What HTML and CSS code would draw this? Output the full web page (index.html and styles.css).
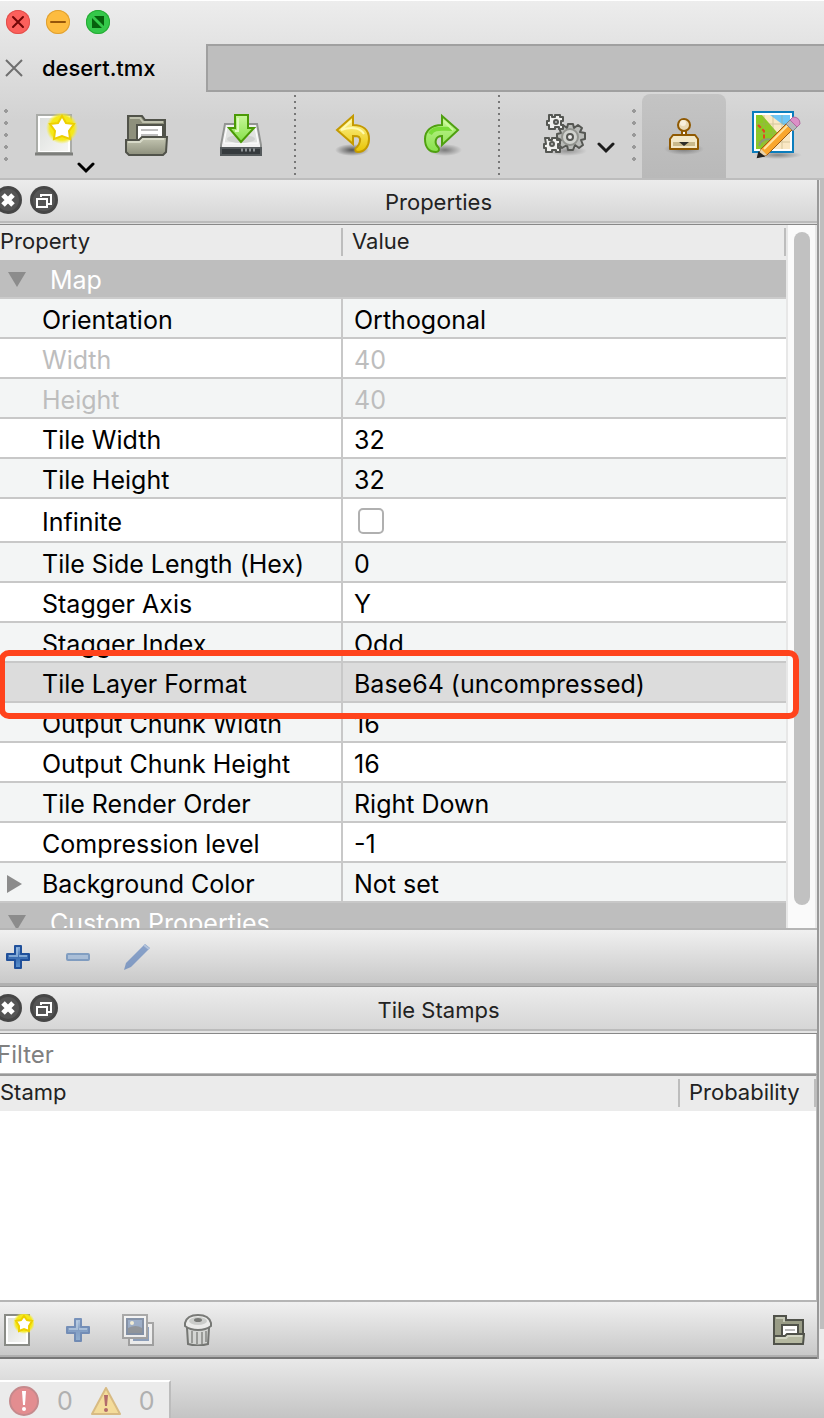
FILE: index.html
```html
<!DOCTYPE html>
<html lang="en">
<head>
<meta charset="utf-8">
<title>desert.tmx</title>
<link rel="stylesheet" href="styles.css">
</head>
<body>
<svg class="defs" aria-hidden="true">
  <defs>
    <linearGradient id="gold" x1="0" y1="0" x2="0" y2="1"><stop offset="0" stop-color="#fff7a0"/><stop offset="1" stop-color="#e8c400"/></linearGradient>
    <linearGradient id="lime" x1="0" y1="0" x2="0" y2="1"><stop offset="0" stop-color="#c8f79a"/><stop offset="1" stop-color="#86e04a"/></linearGradient>
    <linearGradient id="olive" x1="0" y1="0" x2="0" y2="1"><stop offset="0" stop-color="#c6c8b4"/><stop offset="1" stop-color="#8d8f7c"/></linearGradient>
    <linearGradient id="paper" x1="0" y1="0" x2="1" y2="1"><stop offset="0" stop-color="#dcdfdc"/><stop offset="1" stop-color="#f6f6f4"/></linearGradient>
    <linearGradient id="blue" x1="0" y1="0" x2="0" y2="1"><stop offset="0" stop-color="#8db4e0"/><stop offset=".5" stop-color="#3b6cb0"/><stop offset="1" stop-color="#5b93cf"/></linearGradient>
    <radialGradient id="shade"><stop offset="0" stop-color="#000" stop-opacity=".6"/><stop offset="1" stop-color="#000" stop-opacity="0"/></radialGradient>
    <radialGradient id="glow"><stop offset="0" stop-color="#f7e600"/><stop offset=".75" stop-color="#f5e91c"/><stop offset="1" stop-color="#f5ee3c" stop-opacity="0"/></radialGradient>
    <symbol id="i-close" viewBox="0 0 28 28"><circle cx="14" cy="14" r="14" fill="#464646"/><circle cx="14" cy="14" r="11" fill="#555"/><path d="M9 9l10 10M19 9L9 19" stroke="#fff" stroke-width="5"/></symbol>
    <symbol id="i-float" viewBox="0 0 28 28"><circle cx="14" cy="14" r="14" fill="#464646"/><circle cx="14" cy="14" r="11" fill="#555"/><path d="M11 11V9h10v9h-3" fill="none" stroke="#fff" stroke-width="2"/><path d="M7 13h10v8H7z" fill="#555" stroke="#fff" stroke-width="2"/></symbol>
    <symbol id="i-plus" viewBox="0 0 24 24"><path d="M9 1h6v8h8v6h-8v8H9v-8H1V9h8z" fill="url(#blue)" stroke="#20509a" stroke-width="2" stroke-linejoin="round"/><path d="M11 3v8H3M13 11h8" fill="none" stroke="#9cc0e6" stroke-width="2" opacity=".7"/></symbol>
    <symbol id="i-new" viewBox="0 0 44 44"><path d="M3 2h34v38H3z" fill="#fff" stroke="#aaaca8" stroke-width="2"/><path d="M6 5h28v33H6z" fill="url(#paper)"/><path d="M1 41h38" stroke="#7d7e7b" stroke-width="3"/><circle cx="28" cy="15" r="16" fill="url(#glow)"/><path d="M28 5l3 6 7 1-5 5 1 7-6-3-6 3 1-7-5-5 7-1z" fill="#fff" stroke="#fff" stroke-width="3" stroke-linejoin="round"/><path d="M28 3l4 7 8 1-5 7 1 8-8-3-8 3 1-8-5-7 8-1z" fill="none" stroke="#edcf00" stroke-width="2"/></symbol>
    <symbol id="i-folder" viewBox="0 0 44 42"><path d="M3 26V2h14l3 4h20v20z" fill="#8e907c" stroke="#51534a" stroke-width="2"/><path d="M5 4h10l3 4h20" fill="none" stroke="#bfc1ae" stroke-width="2"/><path d="M12 30V11h26v17" fill="#fff" stroke="#51534a" stroke-width="2"/><path d="M16 16h17M16 21h17" stroke="#bfbfbf" stroke-width="2"/><path d="M1 26h13l3-3h25l-1 15-3 3H4l-3-3z" fill="url(#olive)" stroke="#51534a" stroke-width="2"/><path d="M3 28h12l3-3h21" fill="none" stroke="#d8dac9" stroke-width="2"/></symbol>
  </defs>
</svg>

<header class="window-head">
  <div class="titlebar">
    <button class="light light-red" aria-label="Close window"><svg viewBox="0 0 24 24"><path d="M7 7l10 10M17 7L7 17" stroke="#730707" stroke-width="2" stroke-linecap="round"/></svg></button>
    <button class="light light-yellow" aria-label="Minimise window"><svg viewBox="0 0 24 24"><path d="M5 12h14" stroke="#96560a" stroke-width="2" stroke-linecap="round"/></svg></button>
    <button class="light light-green" aria-label="Zoom window"><svg viewBox="0 0 24 24"><path d="M8 6h10v10zM6 8v10h10z" fill="#06600d"/></svg></button>
  </div>
  <div class="tabs">
    <div class="tab">
      <button class="icon-button" aria-label="Close tab"><svg width="28" height="28" viewBox="0 0 28 28"><path d="M6 6l16 16M22 6L6 22" stroke="#6f6f6f" stroke-width="2"/></svg></button>
      <span>desert.tmx</span>
    </div>
    <div class="tab-rest"></div>
  </div>
  <div class="toolbar">
    <span class="grip"></span>
    <button class="icon-button tool-new" aria-label="New"><svg width="44" height="44"><use href="#i-new"/></svg>
      <svg class="chevron" width="18" height="12" viewBox="0 0 18 12"><path d="M2 2l7 7 7-7" fill="none" stroke="#000" stroke-width="3" stroke-linecap="round"/></svg></button>
    <button class="icon-button tool-open" aria-label="Open"><svg width="44" height="42"><use href="#i-folder"/></svg></button>
    <button class="icon-button tool-save" aria-label="Save"><svg width="44" height="44" viewBox="0 0 44 44"><path d="M6 11h32l4 21v10H2V32z" fill="#f1f1f1" stroke="#929492" stroke-width="2"/><path d="M8 14l-3 16h34l-3-16" fill="#e1e3e1" stroke="#fff"/><ellipse cx="22" cy="26" rx="14" ry="4" fill="#cfd1cf"/><path d="M2 35h40v7H2z" fill="#353a3d" stroke="#555a5c" stroke-width="2"/><path d="M22 37h14" stroke="#8d9295" stroke-width="3" stroke-dasharray="2 2"/><path d="M16 2h13v13h6L22 29 10 15h6z" fill="url(#lime)" stroke="#4b9a06" stroke-width="2"/><path d="M19 5v13h-3" fill="none" stroke="#dcfbbd" stroke-width="2"/></svg></button>
    <span class="divider"></span>
    <button class="icon-button tool-undo" aria-label="Undo"><svg width="44" height="44" viewBox="0 0 44 44"><ellipse cx="20" cy="37" rx="17" ry="6" fill="url(#shade)"/><path d="M21 3v9c10 0 16 5 16 14 0 7-4 13-11 13-3 0-4-3-1-5 3-3 4-8 2-10-1-1-3-1-6-1v8L5 17z" fill="url(#gold)" stroke="#c49a00" stroke-width="2"/><path d="M19 8l-10 9c9-3 19-3 23 4" fill="none" stroke="#fffbb0" stroke-width="2"/></svg></button>
    <button class="icon-button tool-redo" aria-label="Redo"><svg width="44" height="44" viewBox="0 0 44 44"><ellipse cx="24" cy="37" rx="17" ry="6" fill="url(#shade)" opacity=".7"/><path d="M21 3v9C10 12 4 18 4 26c0 8 4 13 11 13 3 0 4-3 2-5-4-4-3-11 4-11v9l16-15z" fill="url(#lime)" stroke="#4fa010" stroke-width="2"/><path d="M9 21c4-7 10-5 22-5" fill="none" stroke="#79dc36" stroke-width="4"/><path d="M23 8l9 9" fill="none" stroke="#cdfb9b" stroke-width="2"/></svg></button>
    <span class="divider"></span>
    <button class="icon-button tool-gears" aria-label="Commands">
      <svg width="44" height="44" viewBox="0 0 44 44"><ellipse cx="24" cy="38" rx="20" ry="5" fill="url(#shade)" opacity=".5"/><g stroke="#555753" stroke-width="2" stroke-linejoin="round"><path d="M25 11h5l1 4 4-3 4 3-2 4 5 1v6l-4 1 2 5-4 3-4-3-2 5h-5l-1-5-5 3-4-4 3-4-4-2v-4l4-1-2-5 4-3 4 3z" fill="#b9bbb8"/><path d="M6 2h3v2h3V2h5v2h3v4h-2v4h2v4h-4v-2h-4v2H6v-4H4V8h2zM2 25h4v2h3v-2h5v2h3v4h-2v4h2v4h-4v-2H9v2H3v-4H1v-4h2z" fill="#f0f0ee"/></g><g stroke="#555753" stroke-width="2"><circle cx="27" cy="24" r="8" fill="#d0d2ce" stroke="#92948f"/><circle cx="27" cy="24" r="3" fill="#efefef"/><circle cx="13" cy="9" r="2" fill="#bbb"/><circle cx="9" cy="31" r="2" fill="#bbb"/></g></svg>
      <svg width="18" height="12" viewBox="0 0 18 12"><path d="M2 2l7 7 7-7" fill="none" stroke="#1c1c1c" stroke-width="3" stroke-linecap="round"/></svg>
    </button>
    <span class="grip"></span>
    <button class="icon-button tool-stamp" aria-label="Stamp Brush" aria-pressed="true"><svg width="44" height="44" viewBox="0 0 44 44"><ellipse cx="22" cy="35" rx="20" ry="6" fill="url(#shade)" opacity=".6"/><path d="M20 16h4v8h-4z" fill="#fff" stroke="#8f5902" stroke-width="2"/><circle cx="22" cy="11" r="6" fill="#e9d9b4" stroke="#8f5902" stroke-width="2"/><circle cx="21" cy="9" r="3" fill="#f7efdb"/><path d="M11 21h22l3 4v10H8V25z" fill="#f3e8c8" stroke="#8f5902" stroke-width="2" stroke-linejoin="round"/><path d="M11 28h22v4H11z" fill="#c9b98b"/><path d="M17 28h10l-5 4z" fill="#2e2e2a"/></svg></button>
    <button class="icon-button tool-map" aria-label="Terrain Brush"><svg width="52" height="50" viewBox="0 0 52 50"><ellipse cx="28" cy="45" rx="24" ry="4" fill="url(#shade)" opacity=".6"/><path d="M3 2h40v40H3z" fill="#fff" stroke="#0b7dbd" stroke-width="2"/><path d="M6 5h34v34H6z" fill="#fae8c4"/><path d="M20 5h20v15z" fill="#6fc6f6"/><path d="M6 5h6l19 22-10 12H6z" fill="#8bc924"/><path d="M14 5v34M23 5v34M32 5v34M6 14h34M6 23h34M6 32h34" stroke="#a99f70" opacity=".45"/><path d="M8 15l6 6v8l-5 5" fill="none" stroke="#e4451f" stroke-width="2" stroke-dasharray="4 2"/><path d="M9 36c2-8 12-9 15-2" fill="none" stroke="#8b9b78" stroke-width="2"/><path d="M8 47l3-8L38 12l6 6-27 27z" fill="#f9a62d" stroke="#9b5b18" stroke-width="1"/><path d="M14 39l25-25" stroke="#ffe3a3" stroke-width="2"/><path d="M8 47l3-8 6 6z" fill="#ead3ac"/><path d="M8 47l1-4 4 3z" fill="#222" stroke="#222" stroke-width="2"/><path d="M36 14l4-4 7 7-4 4z" fill="#b5b8bb" stroke="#82868a"/><path d="M40 10l3-3q7 0 7 7l-3 3z" fill="#dc8fc7" stroke="#b269a0"/></svg></button>
  </div>
</header>

<main class="workspace">
  <div class="docks">
    <section class="dock" aria-label="Properties">
      <div class="dock-title">
        <button class="icon-button dock-close" aria-label="Close Properties"><svg width="28" height="28"><use href="#i-close"/></svg></button>
        <button class="icon-button" aria-label="Float Properties"><svg width="28" height="28"><use href="#i-float"/></svg></button>
        <h2>Properties</h2>
      </div>
      <div class="property-view">
        <table class="properties">
          <colgroup><col class="col-name"><col></colgroup>
          <thead><tr><th scope="col"><span>Property</span></th><th scope="col"><span>Value</span></th></tr></thead>
          <tbody>
            <tr class="group"><th colspan="2" scope="colgroup"><i class="arrow-down"></i>Map</th></tr>
            <tr><td>Orientation</td><td>Orthogonal</td></tr>
            <tr class="disabled"><td>Width</td><td>40</td></tr>
            <tr class="disabled"><td>Height</td><td>40</td></tr>
            <tr><td>Tile Width</td><td>32</td></tr>
            <tr><td>Tile Height</td><td>32</td></tr>
            <tr class="tall"><td><label for="infinite">Infinite</label></td><td><input type="checkbox" id="infinite"></td></tr>
            <tr><td>Tile Side Length (Hex)</td><td>0</td></tr>
            <tr><td>Stagger Axis</td><td>Y</td></tr>
            <tr><td>Stagger Index</td><td>Odd</td></tr>
            <tr class="selected"><td>Tile Layer Format</td><td>Base64 (uncompressed)<span class="marker"></span></td></tr>
            <tr><td>Output Chunk Width</td><td>16</td></tr>
            <tr><td>Output Chunk Height</td><td>16</td></tr>
            <tr><td>Tile Render Order</td><td>Right Down</td></tr>
            <tr><td>Compression level</td><td>-1</td></tr>
            <tr><td><i class="arrow-right"></i>Background Color</td><td>Not set</td></tr>
            <tr class="group"><th colspan="2" scope="colgroup"><i class="arrow-down"></i>Custom Properties</th></tr>
          </tbody>
        </table>
        <div class="scroll-track"><div class="scroll-thumb"></div></div>
      </div>
      <div class="action-bar">
        <button class="icon-button" aria-label="Add Property"><svg width="24" height="24"><use href="#i-plus"/></svg></button>
        <button class="icon-button faded" aria-label="Remove Property" disabled><svg width="24" height="24" viewBox="0 0 24 24"><rect x="1" y="9" width="22" height="6" rx="1" fill="#82a7d4" stroke="#376bab" stroke-width="2"/></svg></button>
        <button class="icon-button faded" aria-label="Rename Property" disabled><svg width="28" height="28" viewBox="0 0 28 28"><path d="M0 27l2-7L21 1l5 4L7 24z" fill="#3e6bb3"/><path d="M20 2l5 4" stroke="#8ba9d5" stroke-width="2"/></svg></button>
      </div>
    </section>

    <section class="dock dock-stamps" aria-label="Tile Stamps">
      <div class="dock-title">
        <button class="icon-button dock-close" aria-label="Close Tile Stamps"><svg width="28" height="28"><use href="#i-close"/></svg></button>
        <button class="icon-button" aria-label="Float Tile Stamps"><svg width="28" height="28"><use href="#i-float"/></svg></button>
        <h2>Tile Stamps</h2>
      </div>
      <input class="filter" type="text" placeholder="Filter" aria-label="Filter">
      <div class="stamp-view">
        <table class="stamps">
          <colgroup><col><col class="col-prob"></colgroup>
          <thead><tr><th scope="col"><span>Stamp</span></th><th scope="col"><span>Probability</span></th></tr></thead>
        </table>
      </div>
      <div class="action-bar action-bar-stamps">
        <button class="icon-button" aria-label="New Stamp"><svg width="30" height="32" viewBox="0 0 30 32"><path d="M1 1h24v30H1z" fill="#fff" stroke="#898b86" stroke-width="2"/><path d="M4 4h18v24H4z" fill="url(#paper)"/><circle cx="20" cy="9" r="11" fill="url(#glow)"/><path d="M20 2l3 4 5 1-3 5v5l-5-2-5 2v-5l-3-5 5-1z" fill="#fff" stroke="#edcf00" stroke-width="2"/></svg></button>
        <button class="icon-button faded" aria-label="Add Variation" disabled><svg width="24" height="24"><use href="#i-plus"/></svg></button>
        <button class="icon-button faded" aria-label="Duplicate" disabled><svg width="32" height="32" viewBox="0 0 32 32"><path d="M7 9h24v22H7z" fill="#fff" stroke="#777" stroke-width="2"/><path d="M11 13h16v14H11z" fill="#5474a4"/><path d="M1 1h24v23H1z" fill="#fff" stroke="#777" stroke-width="2"/><path d="M5 5h16v15H5z" fill="#6886b3" stroke="#3b5379" stroke-width="2"/><path d="M6 14q8-4 14 0v5H6z" fill="#555c65"/><circle cx="10" cy="9" r="2" fill="#fff6cf"/></svg></button>
        <button class="icon-button dim" aria-label="Delete" disabled><svg width="28" height="32" viewBox="0 0 28 32"><path d="M3 14h22l-1 16q-10 3-20 0z" fill="#d3d5d2" stroke="#555753" stroke-width="2"/><path d="M8 17v12M13 18v12M18 18v12M22 17v11" stroke="#858783" stroke-width="2"/><path d="M1 9q2-8 13-8t13 8v3q-5 4-13 4T1 12z" fill="#f0f0ee" stroke="#555753" stroke-width="2"/><ellipse cx="14" cy="7" rx="9" ry="4" fill="#c4c6c3"/><ellipse cx="14" cy="6" rx="4" ry="2" fill="#555753"/></svg></button>
        <button class="icon-button push" aria-label="Set Stamps Folder"><svg width="32" height="30" viewBox="0 0 32 30"><path d="M1 1h12v4h17v20H1z" fill="#999c86" stroke="#50524a" stroke-width="2"/><path d="M3 3h8v4" fill="none" stroke="#c4c7b5" stroke-width="2"/><path d="M9 22V10h16v10" fill="#fff" stroke="#50524a" stroke-width="2"/><path d="M12 15h10" stroke="#bbb" stroke-width="2"/><path d="M1 21h11l2-2h17l-1 10H1z" fill="#b5b8a0" stroke="#50524a" stroke-width="2"/><path d="M3 23h10l2-2h14" fill="none" stroke="#d3d6c4" stroke-width="2"/></svg></button>
      </div>
    </section>
  </div>
  <div class="canvas-edge"></div>
</main>

<footer class="statusbar">
  <button class="issues" aria-label="0 errors, 0 warnings">
    <svg width="30" height="30" viewBox="0 0 30 30"><circle cx="15" cy="15" r="14" fill="#e38d90" stroke="#c5898c" stroke-width="2"/><path d="M13 5h4l-1 14h-2z" fill="#fff"/><circle cx="15" cy="23" r="2" fill="#fff"/></svg>
    <span>0</span>
    <svg width="30" height="28" viewBox="0 0 30 28"><path d="M15 1l14 26H1z" fill="#f4dc9a" stroke="#d8bb83" stroke-width="2" stroke-linejoin="round"/><path d="M13 8h4l-1 11h-2z" fill="#b26b6b"/><circle cx="15" cy="23" r="2" fill="#b26b6b"/></svg>
    <span>0</span>
  </button>
</footer>
</body>
</html>
```
FILE: styles.css
```css
* {
  box-sizing: border-box;
}

body {
  margin: 0;
  min-height: 100vh;
  display: flex;
  flex-direction: column;
  overflow-x: hidden;
  background: #ececec;
  color: #000;
  font-family: Inter, "Liberation Sans", sans-serif;
  font-size: 22px;
}

.defs {
  position: absolute;
  width: 0;
  height: 0;
}

svg {
  display: block;
}

button {
  padding: 0;
  border: 0;
  background: none;
  font: inherit;
}

.icon-button {
  display: flex;
  align-items: center;
  justify-content: center;
  flex: none;
}

/* Window head */

.window-head {
  background: linear-gradient(#ededed, #d2d2d2 120px);
  border-bottom: 2px solid #bdbdbd;
}

.titlebar {
  display: flex;
  align-items: center;
  gap: 16px;
  height: 44px;
  padding-left: 6px;
  padding-bottom: 1px;
  border-top: 1px solid #fff;
}

.light {
  width: 24px;
  height: 24px;
  border-radius: 50%;
}

.light-red {
  background: #fc605c;
  box-shadow: inset 0 0 0 1px #e1504c;
}

.light-yellow {
  background: #fdbc40;
  box-shadow: inset 0 0 0 1px #dfa033;
}

.light-green {
  background: #34c84a;
  box-shadow: inset 0 0 0 1px #27aa35;
}

.tabs {
  display: flex;
  height: 48px;
}

.tab {
  display: flex;
  align-items: center;
  gap: 14px;
  width: 206px;
  font-weight: 500;
}

.tab-rest {
  flex: 1;
  background: #bebebe;
  border: 2px solid #a0a0a0;
  border-right: 0;
}

.toolbar {
  display: flex;
  align-items: center;
  height: 86px;
}

.grip {
  flex: none;
  width: 4px;
  height: 52px;
  background: radial-gradient(circle at 2px 2px, #999 2px, transparent 2px) 0 0 / 4px 12px;
}

.toolbar > .grip:first-child {
  margin-left: 4px;
}

.divider {
  flex: none;
  width: 2px;
  height: 80px;
  background: repeating-linear-gradient(#777 0 2px, transparent 2px 6px);
}

.tool-new {
  position: relative;
  margin-left: 26px;
}

.chevron {
  position: absolute;
  left: 43px;
  top: 49px;
}

.tool-open {
  margin-left: 47px;
}

.tool-save {
  margin-left: 50px;
}

.tool-save + .divider {
  margin-left: 31px;
}

.tool-undo {
  margin-left: 36px;
}

.tool-redo {
  margin-left: 45px;
}

.tool-redo + .divider {
  margin-left: 33px;
}

.tool-gears {
  margin-left: 43px;
  gap: 10px;
}

.tool-gears svg:last-child {
  margin-top: 26px;
}

.tool-gears + .grip {
  margin-left: 17px;
}

.tool-stamp {
  align-self: flex-end;
  width: 84px;
  height: 84px;
  margin-left: 6px;
  border-radius: 8px 8px 0 0;
  background: linear-gradient(#c4c4c4, #b9b9b9);
}

.tool-map {
  margin-left: 24px;
}

/* Docks */

.workspace {
  flex: 1;
  display: flex;
}

.docks {
  flex: 1;
  min-width: 0;
  display: flex;
  flex-direction: column;
  border-right: 2px solid #999;
}

.canvas-edge {
  width: 5px;
  margin-bottom: 30px;
  background: #bebebe;
  border-left: 1px solid #e5e5e5;
}

.dock {
  display: flex;
  flex-direction: column;
}

.dock-stamps {
  flex: 1;
}

.dock-title {
  display: grid;
  grid-template-columns: 22px 28px 1fr;
  column-gap: 8px;
  align-items: center;
  height: 45px;
  padding-bottom: 4px;
  background: linear-gradient(#ececec, #d6d6d6 41px, #bbb 41px 43px, #ddd 43px);
  border-bottom: 1px solid #888;
}

.dock-stamps .dock-title {
  height: 47px;
  background: linear-gradient(#ececec, #d6d6d6 42px, #bbb 42px 44px, #e4e4e4 44px);
}

.dock-close {
  justify-content: flex-end;
  overflow: hidden;
}

.dock-close svg {
  flex: none;
}

.dock-title h2 {
  margin: 0;
  padding: 4px 6px 0 0;
  font-size: 22px;
  line-height: 28px;
  font-weight: 400;
  text-align: center;
  color: #222;
}

.property-view {
  display: flex;
  height: 703px;
  overflow: hidden;
  background: #fff;
}

table {
  border-collapse: separate;
  border-spacing: 0;
  table-layout: fixed;
}

thead th {
  height: 35px;
  padding: 3px 0 4px;
  background: #ebebeb;
  color: #222;
  font-weight: 400;
  text-align: left;
}

thead th span {
  display: block;
  height: 28px;
  line-height: 26px;
  border-right: 2px solid #bdbdbd;
}

.properties {
  flex: 1;
  height: 0;
  color: #000;
}

.col-name {
  width: 343px;
}

.properties thead th + th span {
  padding-left: 9px;
}

.properties td {
  height: 40px;
  padding: 4px 0 0 11px;
  line-height: 34px;
  font-size: 25px;
  white-space: nowrap;
  border-bottom: 2px solid #c8c8c8;
}

.properties td:first-child {
  position: relative;
  padding-left: 42px;
  border-right: 2px solid #c8c8c8;
}

.properties tbody tr:nth-child(even) {
  background: #f3f5f5;
}

.properties tbody .tall td {
  height: 44px;
  line-height: 38px;
}

.properties .disabled {
  color: #bdbdbd;
}

.properties tbody .selected {
  position: relative;
  background: #dcdcdc;
}

.marker {
  position: absolute;
  z-index: 1;
  top: -13px;
  right: -13px;
  bottom: -16px;
  left: -1px;
  border: 6px solid #ff431c;
  border-radius: 10px;
}

.properties tbody .group th {
  position: relative;
  height: 39px;
  padding: 4px 0 0 50px;
  line-height: 33px;
  font-size: 25px;
  font-weight: 400;
  text-align: left;
  color: #fff;
  background: #bebebe;
  border-bottom: 2px solid #cbcbcb;
}

.arrow-down,
.arrow-right {
  position: absolute;
  left: 8px;
  top: 12px;
  border: 9px solid transparent;
  border-top: 15px solid #8c8c8c;
  border-bottom: 0;
}

.arrow-right {
  left: 7px;
  border: 9px solid transparent;
  border-left: 15px solid #8c8c8c;
  border-right: 0;
}

input[type="checkbox"] {
  appearance: none;
  display: block;
  width: 26px;
  height: 26px;
  margin: 0 0 2px 4px;
  border: 2px solid #b0b0b0;
  border-radius: 5px;
  background: #fff;
}

.scroll-track {
  width: 31px;
  padding: 7px 7px 0 6px;
  background: #fafafa;
  border-left: 2px solid #e7e7e7;
  border-right: 2px solid #e7e7e7;
}

.scroll-thumb {
  width: 16px;
  height: 673px;
  border-radius: 8px;
  background: #c1c1c1;
}

.action-bar {
  display: flex;
  align-items: center;
  gap: 36px;
  height: 59px;
  padding: 0 6px 2px;
  background: linear-gradient(#f0f0f0, #c9c9c9 53px, #b0b0b0 53px);
  border-top: 2px solid #b5b5b5;
  border-bottom: 1px solid #999;
}

.action-bar > :nth-child(3) {
  margin-left: -2px;
}

.action-bar-stamps {
  gap: 32px;
  padding: 0 12px 0 4px;
  border-bottom: 2px solid #777;
}

.action-bar-stamps > :nth-child(3) {
  margin-left: 0;
}

.action-bar .push {
  margin-left: auto;
}

.faded {
  opacity: 0.55;
}

.dim {
  margin-left: -2px;
  opacity: 0.75;
}

.filter {
  display: block;
  width: 100%;
  height: 40px;
  padding: 2px 0 0;
  border: 1px solid #bbb;
  border-left: 0;
  border-top: 0;
  border-radius: 0;
  outline: 0;
  background: #fff;
  font: inherit;
  font-size: 24px;
  text-indent: -3px;
}

.filter::placeholder {
  color: #808080;
  opacity: 1;
}

.stamp-view {
  flex: 1;
  min-height: 224px;
  background: #fff;
  border-top: 2px solid #999;
  border-right: 1px solid #bbb;
}

.stamps {
  width: 100%;
}

.col-prob {
  width: 136px;
}

.stamps th + th span {
  padding-left: 9px;
}

/* Status bar */

.statusbar {
  display: flex;
  align-items: flex-end;
  height: 59px;
  background: linear-gradient(#e9e9e9, #c4c4c4);
}

.issues {
  display: flex;
  align-items: center;
  height: 38px;
  gap: 18px;
  padding: 2px 14px 0 9px;
  background: #ebebeb;
  border-top: 2px solid #fff;
  border-right: 2px solid #bcbcbc;
  color: #b0b0b0;
  font-size: 25px;
}
```
